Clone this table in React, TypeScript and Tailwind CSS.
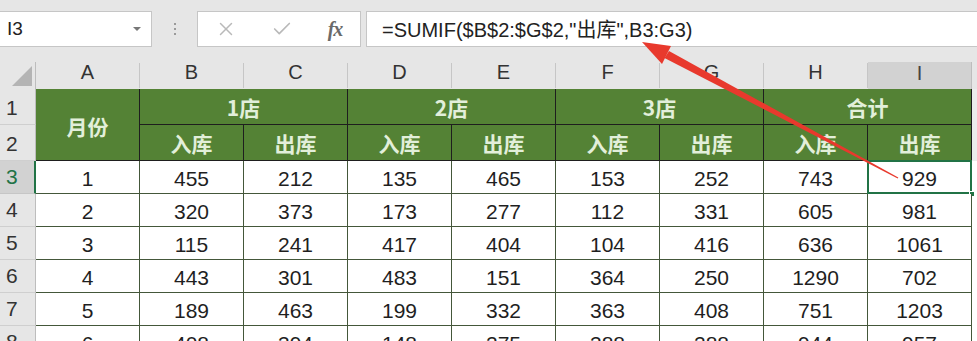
import { X, Check } from "lucide-react";

const cols = ["A", "B", "C", "D", "E", "F", "G", "H", "I"];

const rows = [
  [1, 455, 212, 135, 465, 153, 252, 743, 929],
  [2, 320, 373, 173, 277, 112, 331, 605, 981],
  [3, 115, 241, 417, 404, 104, 416, 636, 1061],
  [4, 443, 301, 483, 151, 364, 250, 1290, 702],
  [5, 189, 463, 199, 332, 363, 408, 751, 1203],
  [6, 408, 394, 148, 275, 388, 288, 944, 957],
];

const stores = ["1店", "2店", "3店", "合计"];

const cjk = "font-['Microsoft_YaHei','Noto_Sans_CJK_SC',sans-serif]";
const num = "font-['Liberation_Sans','Noto_Sans_CJK_SC',sans-serif]";

const RowHead = ({ n, active }: { n: number; active?: boolean }) => (
  <div
    className={
      active
        ? "flex items-end pl-[6px] pb-[1px] text-[21px] text-[#217346] bg-[#d2d2d2] border-r-2 border-r-[#217346] border-b border-b-[#c6c6c6]"
        : "flex items-end pl-[6px] pb-[1px] text-[21px] text-[#333] bg-[#e6e6e6] border-r border-r-[#bdbdbd] border-b border-b-[#cfcfcf]"
    }
  >
    {n}
  </div>
);

export default function App() {
  return (
    <div className={`relative w-[977px] h-[341px] overflow-hidden bg-[#e6e6e6] ${num}`}>
      {/* formula bar */}
      <div className="flex h-[62px] pt-[11px] items-start">
        <div className="w-[152px] h-[36px] bg-white border border-l-0 border-[#c6c6c6] flex items-center justify-between pl-[7px] pr-[10px]">
          <span className="text-[19px] text-[#222]">I3</span>
          <span className="w-0 h-0 border-x-[4px] border-x-transparent border-t-[4px] border-t-[#777]" />
        </div>
        <div className="w-[45px] h-[36px] flex flex-col items-center justify-center gap-[3px]">
          <span className="w-[2px] h-[2px] bg-[#9a9a9a]" />
          <span className="w-[2px] h-[2px] bg-[#9a9a9a]" />
          <span className="w-[2px] h-[2px] bg-[#9a9a9a]" />
        </div>
        <div className="w-[164px] h-[36px] bg-white border border-[#c6c6c6] flex items-center">
          <div className="w-[56px] flex justify-center">
            <X size={22} strokeWidth={1.6} className="text-[#b9b9b9]" />
          </div>
          <div className="w-[56px] flex justify-center">
            <Check size={22} strokeWidth={1.8} className="text-[#b9b9b9]" />
          </div>
          <div className="flex-1 flex justify-center">
            <span className="font-['Liberation_Serif',serif] italic font-bold text-[20px] text-[#6a6a6a] tracking-[-1px]">fx</span>
          </div>
        </div>
        <div className="ml-[5px] flex-1 h-[36px] bg-white border border-r-0 border-[#c6c6c6] flex items-center pl-[15px]">
          <span className={`text-[20px] text-[#222] ${num}`}>
            =SUMIF($B$2:$G$2,"
            <span className={cjk}>出库</span>
            ",B3:G3)
          </span>
        </div>
      </div>

      {/* sheet */}
      <div className="grid grid-cols-[36px_repeat(9,104px)_1fr] grid-rows-[27px_36px_36px_repeat(6,33px)]">
        {/* column header row */}
        <div className="relative bg-[#e6e6e6] border-r border-r-[#bdbdbd]">
          <span className="absolute right-[3px] bottom-[3px] w-0 h-0 border-l-[20px] border-l-transparent border-b-[20px] border-b-[#b4b4b4]" />
        </div>
        {cols.map((c) => (
          <div
            key={c}
            className={
              c === "I"
                ? "flex items-end justify-center pb-[1px] text-[20px] text-[#444] bg-[#d2d2d2] border-r border-r-[#bdbdbd]"
                : "flex items-end justify-center pb-[1px] text-[20px] text-[#333] bg-[#e6e6e6] border-r border-r-[#c6c6c6] my-[1px]"
            }
          >
            {c}
          </div>
        ))}
        <div className="bg-[#e6e6e6]" />

        {/* row 1 */}
        <RowHead n={1} />
        <div className={`row-span-2 flex items-center justify-center pt-[4px] bg-[#548235] border-r border-b border-[#1e1e1e] text-[21px] font-bold text-[#e2efda] ${cjk}`}>
          月份
        </div>
        {stores.map((s) => (
          <div
            key={s}
            className={`col-span-2 flex items-center justify-center pt-[3px] bg-[#548235] border-r border-b border-[#1e1e1e] text-[21px] font-bold text-[#e2efda] ${cjk}`}
          >
            {s}
          </div>
        ))}
        <div className="bg-[#ececec]" />

        {/* row 2 */}
        <RowHead n={2} />
        {["入库", "出库", "入库", "出库", "入库", "出库", "入库", "出库"].map((s, i) => (
          <div
            key={i}
            className={`flex items-center justify-center pt-[3px] bg-[#548235] border-r border-b border-[#1e1e1e] text-[21px] font-bold text-[#e2efda] ${cjk}`}
          >
            {s}
          </div>
        ))}
        <div className="bg-[#ececec]" />

        {/* data */}
        {rows.map((r, ri) => (
          <div key={ri} className="contents">
            <RowHead n={ri + 3} active={ri === 0} />
            {r.map((v, ci) => (
              <div
                key={ci}
                className="relative flex items-center justify-center pt-[3px] bg-white border-r border-b border-[#44573a] text-[21px] text-[#1f1f1f]"
              >
                {v}
                {ri === 0 && ci === 8 && (
                  <>
                    <span className="absolute -left-px -top-px -right-px -bottom-px border-2 border-[#217346]" />
                    <span className="absolute -right-[4px] -bottom-[4px] w-[6px] h-[6px] bg-[#217346] border border-white" />
                  </>
                )}
              </div>
            ))}
            <div className="bg-white" />
          </div>
        ))}
      </div>

      {/* red arrow */}
      <svg className="absolute left-0 top-0 pointer-events-none" width="977" height="341" viewBox="0 0 977 341">
        <polygon points="642,42 671,46 662,64" fill="#e8392d" />
        <polygon points="664.5,58 669,51 898.3,177.6 897.7,178.4" fill="#e8392d" />
      </svg>
    </div>
  );
}
